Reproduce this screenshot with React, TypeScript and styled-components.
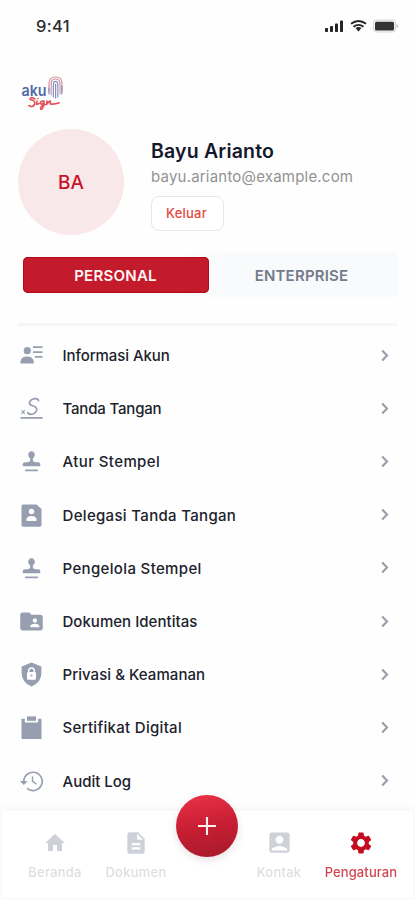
import React from "react";
import styled, { createGlobalStyle } from "styled-components";
import { MdHome, MdDescription, MdAccountBox, MdSettings, MdFolderShared } from "react-icons/md";

const Global = createGlobalStyle`
  * { box-sizing: border-box; }
  body { margin: 0; background: #fefefe; font-family: Inter, "Liberation Sans", sans-serif; }
`;

const Screen = styled.div`
  width: 415px;
  height: 900px;
  overflow: hidden;
  background: #fefefe;
  display: flex;
  flex-direction: column;
`;

const StatusBar = styled.header`
  height: 52px;
  flex: none;
  display: flex;
  justify-content: space-between;
  align-items: center;
  padding: 0 16px 0 36px;
`;

const Clock = styled.span`
  font-size: 16.5px;
  font-weight: 500;
  color: #2c2c2c;
  letter-spacing: 0.35px;
`;

const LogoRow = styled.div`
  height: 77px;
  flex: none;
  padding: 22px 0 0 19px;
  svg { display: block; }
`;

const Profile = styled.section`
  height: 107px;
  flex: none;
  display: flex;
  gap: 27px;
  padding-left: 18px;
`;

const Avatar = styled.div`
  width: 106px;
  height: 106px;
  border-radius: 50%;
  background: #f9e8e9;
  color: #c8142a;
  font-size: 19px;
  font-weight: 500;
  display: flex;
  align-items: center;
  justify-content: center;
`;

const Details = styled.div`
  display: flex;
  flex-direction: column;
  align-items: flex-start;
  padding-top: 10px;
`;

const Name = styled.h1`
  margin: 0;
  font-size: 19.5px;
  line-height: 25px;
  font-weight: 600;
  letter-spacing: 0.18px;
  color: #14182c;
`;

const Email = styled.span`
  font-size: 15px;
  line-height: 26px;
  letter-spacing: 0.2px;
  color: #929292;
`;

const Logout = styled.button`
  margin: 6px 0 0;
  padding: 0 2px 2px 0;
  width: 73px;
  height: 35px;
  border: 1.5px solid #e6e9ea;
  border-radius: 8px;
  background: #fff;
  color: #e34a3e;
  font: 500 13px Inter, sans-serif;
  letter-spacing: 0.2px;
`;

const Tabs = styled.div`
  height: 45px;
  flex: none;
  margin: 16px 17px 0 18px;
  padding: 5px 3px 4px 5px;
  display: flex;
  background: linear-gradient(90deg, #fefefe 40%, #f8fafb 55%);
`;

const Tab = styled.button<{ $active?: boolean }>`
  flex: 1;
  border: 0;
  padding: ${(p) => (p.$active ? "0 1px 0 0" : "0 1px 0 0")};
  height: 36px;
  border-radius: 5px;
  background: ${(p) => (p.$active ? "#c31a2c" : "transparent")};
  box-shadow: ${(p) => (p.$active ? "inset 0 0 0 1px #bd0718" : "none")};
  color: ${(p) => (p.$active ? "#fff4f4" : "#747b8b")};
  font: 600 15px Inter, sans-serif;
  letter-spacing: ${(p) => (p.$active ? "0.25px" : "0.2px")};
`;

const Divider = styled.hr`
  width: 379px;
  height: 3px;
  flex: none;
  margin: 26px 0 3px 18px;
  border: 0;
  background: #f6f6f7;
`;

const Menu = styled.nav`
  height: 480px;
  flex: none;
  display: grid;
  grid-auto-rows: 53.2px;
`;

const MenuRow = styled.a`
  display: grid;
  grid-template-columns: 27px 1fr 14px;
  column-gap: 17px;
  align-items: center;
  padding: 0 23px 0 18px;
  color: #969eb0;
  svg { display: block; }
`;

const Label = styled.span<{ $tracking: number }>`
  padding-left: 0.5px;
  font-size: 15px;
  font-weight: 500;
  white-space: nowrap;
  letter-spacing: ${(p) => p.$tracking}px;
  color: #20222c;
`;

const BottomBar = styled.footer`
  position: fixed;
  left: 2px;
  top: 811px;
  width: 411px;
  height: 87px;
  border-radius: 3px;
  background: #fff;
  box-shadow: 0 -1px 6px 2px rgba(0, 0, 0, 0.035);
  display: grid;
  grid-template-columns: 94px 68px 71px 76px 88px;
  padding: 17px 0 0 6px;
`;

const NavItem = styled.a<{ $active?: boolean }>`
  display: flex;
  flex-direction: column;
  align-items: center;
  color: ${(p) => (p.$active ? "#c40c20" : "#ced2d8")};
  span {
    margin-top: 6px;
    font-size: 13px;
    line-height: 18px;
    letter-spacing: ${(p) => (p.$active ? "0.1px" : "0.25px")};
    color: ${(p) => (p.$active ? "#d24652" : "#dcdee2")};
    font-weight: 500;
  }
`;

const IconBox = styled.div`
  height: 29px;
  display: flex;
  align-items: center;
`;

const AddButton = styled.button`
  position: fixed;
  left: 176px;
  top: 795px;
  width: 62px;
  height: 62px;
  padding: 0;
  border: 0;
  border-radius: 50%;
  background: linear-gradient(170deg, #e62f45 8%, #c71e33 50%, #a91b2b 96%);
  box-shadow: 0 3px 9px rgba(80, 20, 40, 0.12);
  display: grid;
  place-items: center;
`;

const Logo = () => (
  <svg width="46" height="40" viewBox="0 0 46 40" fill="none">
    <text x="2.5" y="22" fontFamily="Inter" fontSize="15" fontWeight="600" fill="#5168a5" textLength="25" lengthAdjust="spacingAndGlyphs">aku</text>
    <g strokeWidth="1.2" strokeLinecap="round">
      <path d="M30 18V9.5Q30 3 36.5 3T43 9.5V18" stroke="#e18b94" />
      <path d="M32.2 21V9.5Q32.2 5 36.5 5T41 9.5V20" stroke="#c99aaf" />
      <path d="M34.4 23V10Q34.4 7.3 36.5 7.3T38.8 10V23M36.6 10V24M30 14V20M42.8 12V20" stroke="#8a93bd" />
    </g>
    <path d="M16 25Q11.5 22 11 25.5Q17 26.5 15.5 30.5Q13.5 34 10 31.5M18 27L17.5 30.5L20 29.5M25 27Q21 26.5 21.5 29.5Q23 31.5 25 27.5Q25 34.5 22 35.5Q20 33 26 30.5M28 27L27.5 30.5Q31 26 31.5 27.5L31.2 30Q36 30.5 40 28.8" stroke="#e34f58" strokeWidth="1.6" strokeLinecap="round" strokeLinejoin="round" />
    <circle cx="19" cy="24.6" r=".8" fill="#e34f58" />
  </svg>
);

const StatusIcons = () => (
  <svg width="76" height="20" viewBox="0 0 76 20">
    <g fill="#252525">
      <rect x="2" y="12" width="3" height="4" rx=".8" />
      <rect x="7" y="10" width="3" height="6" rx=".8" />
      <rect x="12" y="7.5" width="3" height="8.5" rx=".8" />
      <rect x="17" y="4.5" width="3" height="11.5" rx=".8" />
      <path d="M32.5 12Q35.5 10 38.5 12L35.5 15.5Z" />
    </g>
    <path d="M28 7.8Q35.5 2.2 43 7.8M30.5 10.7Q35.5 7 40.5 10.7" fill="none" stroke="#252525" strokeWidth="1.9" />
    <rect x="50.5" y="4" width="22" height="12" rx="3" fill="#f4f4f4" stroke="#d2d2d2" strokeWidth=".9" />
    <rect x="52" y="5.8" width="19" height="8.6" rx="1.5" fill="#333" />
    <path d="M73.6 8Q76.5 10.2 73.6 12.5Z" fill="#bbb" />
  </svg>
);

type GlyphProps = { children: React.ReactNode };
const Glyph = ({ children }: GlyphProps) => (
  <svg width="27" height="27" viewBox="0 0 27 27" fill="currentColor">{children}</svg>
);

const Account = () => (
  <Glyph>
    <circle cx="9.3" cy="8.7" r="3.6" />
    <path d="M2.5 21.5V19.5Q3 14.6 9 14.6T15.8 19.5V21.5Z" />
    <path d="M15 4.3h9.5v1.7H15zM15 9.2h9.5v1.7H15zM17 14h7.5v1.7H17z" />
  </Glyph>
);
const Signature = () => (
  <Glyph>
    <path d="M2.5 22h22v1.8h-22z" />
    <path d="M20.5 6.4Q20.5 3.5 17.2 3.6Q12.5 4.1 11.4 7.5Q11.1 9.8 14.6 10.8Q19.7 12.5 18.6 15.5Q17 19.3 12.8 19.3Q9.3 19 9.8 16.8" fill="none" stroke="currentColor" strokeWidth="1.7" />
    <path d="M3.5 15.3L6.7 18.8M6.8 15.2L3.4 18.9" fill="none" stroke="currentColor" strokeWidth="1.1" />
  </Glyph>
);
const Stamp = () => (
  <Glyph>
    <path d="M13.5 3.3A3.5 3.5 0 0 0 10.2 7.2Q10.2 8.8 12.2 10.4V12.2Q11.8 14.2 8 14.2H7Q4.7 14.4 4.7 16.3V18.2H22.3V16.3Q22.3 14.4 20 14.2H19Q15.2 14.2 14.8 12.2V10.4Q16.8 8.8 16.8 7.2A3.5 3.5 0 0 0 13.5 3.3Z" />
    <rect x="7" y="21.4" width="13" height="1.9" rx=".5" />
  </Glyph>
);
const ContactFile = () => (
  <Glyph>
    <path d="M5 2.5H18.5L23.5 7V23Q23.5 24.7 22 24.7H5Q3.5 24.7 3.5 23V4Q3.5 2.5 5 2.5Z" />
    <circle cx="13.5" cy="9.5" r="2.7" fill="#fefefe" />
    <path d="M8.5 19V17.3Q9.3 14 13.5 14T18.5 17.3V19Z" fill="#fefefe" />
  </Glyph>
);
const Shield = () => (
  <Glyph>
    <path d="M13.5 1.6L23.4 5.6V12Q23.4 21.6 13.5 25.4Q3.6 21.6 3.6 12V5.6Z" />
    <path d="M10.7 11V9.8Q10.7 7 13.5 7T16.3 9.8V11" fill="none" stroke="#fefefe" strokeWidth="1.5" />
    <rect x="9" y="11" width="9" height="7.8" rx="1.2" fill="#fefefe" />
    <circle cx="13.5" cy="14.5" r="1" />
  </Glyph>
);
const Clipboard = () => (
  <Glyph>
    <path d="M3.5 4.7H6.8V8.6H20.2V4.7H23.5V25H3.5Z" />
    <path d="M9 2.4H18V6.8H9Z" />
  </Glyph>
);
const History = () => (
  <Glyph>
    <path d="M5.8 14.5V13A9.2 9.2 0 1 1 9 20.4" fill="none" stroke="currentColor" strokeWidth="1.6" />
    <path d="M2 13H9.6L5.8 17Z" />
    <path d="M14.5 8.5V13.3L18.5 16.2" fill="none" stroke="currentColor" strokeWidth="1.4" />
  </Glyph>
);
const Chevron = () => (
  <svg width="14" height="14" viewBox="0 0 14 14" fill="none">
    <path d="M4.2 1.6L9 6.5L4.2 11.4" stroke="#9a9da7" strokeWidth="2.1" />
  </svg>
);

const items: { label: string; icon: React.ReactNode; tracking: number }[] = [
  { label: "Informasi Akun", icon: <Account />, tracking: -0.07 },
  { label: "Tanda Tangan", icon: <Signature />, tracking: -0.18 },
  { label: "Atur Stempel", icon: <Stamp />, tracking: 0.4 },
  { label: "Delegasi Tanda Tangan", icon: <ContactFile />, tracking: 0.32 },
  { label: "Pengelola Stempel", icon: <Stamp />, tracking: 0.35 },
  { label: "Dokumen Identitas", icon: <MdFolderShared size={27} />, tracking: 0.03 },
  { label: "Privasi & Keamanan", icon: <Shield />, tracking: 0.05 },
  { label: "Sertifikat Digital", icon: <Clipboard />, tracking: 0.3 },
  { label: "Audit Log", icon: <History />, tracking: 0 },
];

export default function App() {
  return (
    <Screen>
      <Global />
      <StatusBar>
        <Clock>9:41</Clock>
        <StatusIcons />
      </StatusBar>
      <LogoRow><Logo /></LogoRow>
      <Profile>
        <Avatar>BA</Avatar>
        <Details>
          <Name>Bayu Arianto</Name>
          <Email>bayu.arianto@example.com</Email>
          <Logout>Keluar</Logout>
        </Details>
      </Profile>
      <Tabs>
        <Tab $active>PERSONAL</Tab>
        <Tab>ENTERPRISE</Tab>
      </Tabs>
      <Divider />
      <Menu>
        {items.map((item) => (
          <MenuRow key={item.label}>
            {item.icon}
            <Label $tracking={item.tracking}>{item.label}</Label>
            <Chevron />
          </MenuRow>
        ))}
      </Menu>
      <BottomBar>
        <NavItem><IconBox><MdHome size={24} /></IconBox><span>Beranda</span></NavItem>
        <NavItem><IconBox><MdDescription size={26} /></IconBox><span>Dokumen</span></NavItem>
        <div />
        <NavItem><IconBox><MdAccountBox size={27} /></IconBox><span>Kontak</span></NavItem>
        <NavItem $active><IconBox><MdSettings size={26} /></IconBox><span>Pengaturan</span></NavItem>
      </BottomBar>
      <AddButton aria-label="Tambah">
        <svg width="22" height="22" viewBox="0 0 22 22">
          <path d="M11 2V20M2 11H20" stroke="#fff0f0" strokeWidth="2.1" />
        </svg>
      </AddButton>
    </Screen>
  );
}
